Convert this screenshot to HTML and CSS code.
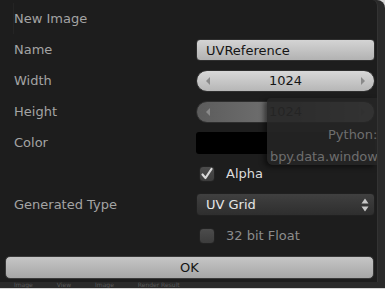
FILE: index.html
```html
<!DOCTYPE html>
<html lang="en">

<head>
    <meta charset="UTF-8">
    <title>New Image</title>
    <link rel="stylesheet" href="styles.css">
</head>

<body>

    <div id="frame">
        <div id="panel">
            <div class="title">New Image</div>

            <div class="row">
                <div class="label">Name</div>
                <div class="control">
                    <div class="text-field">UVReference</div>
                </div>
            </div>

            <div class="row">
                <div class="label">Width</div>
                <div class="control">
                    <div class="num-field">
                        <span class="arrow left"></span>
                        <span class="value">1024</span>
                        <span class="arrow right"></span>
                    </div>
                </div>
            </div>

            <div class="row">
                <div class="label">Height</div>
                <div class="control">
                    <div class="num-field dim">
                        <span class="arrow left"></span>
                        <span class="value">1024</span>
                        <span class="arrow right"></span>
                    </div>
                </div>
            </div>

            <div class="row">
                <div class="label">Color</div>
                <div class="control">
                    <div class="swatch"></div>
                </div>
            </div>

            <div class="row">
                <div class="label"></div>
                <div class="control">
                    <label class="check on">
                        <span class="box">
                            <svg width="14" height="14" viewBox="0 0 14 14">
                                <path d="M2.5 7.5 L5.5 11 L11.5 2" fill="none" stroke="#d8d8d8" stroke-width="2.2" stroke-linecap="round" stroke-linejoin="round"/>
                            </svg>
                        </span>
                        Alpha
                    </label>
                </div>
            </div>

            <div class="row">
                <div class="label">Generated Type</div>
                <div class="control">
                    <div class="menu">
                        UV Grid
                        <svg class="updown" width="8" height="14" viewBox="0 0 8 14">
                            <path d="M4 0.5 L7.5 5.5 L0.5 5.5 Z M4 13.5 L7.5 8.5 L0.5 8.5 Z" fill="#c8c8c8"/>
                        </svg>
                    </div>
                </div>
            </div>

            <div class="row">
                <div class="label"></div>
                <div class="control">
                    <label class="check">
                        <span class="box"></span>
                        32 bit Float
                    </label>
                </div>
            </div>

            <div class="ok">OK</div>

            <div class="tooltip">
                <div class="tip-line first">Python:</div>
                <div class="tip-line second">bpy.data.window</div>
            </div>
        </div>
        <div id="header">
            <span>Image</span><span>View</span><span>Image</span><span>Render Result</span>
        </div>
    </div>

</body>

</html>
```

FILE: styles.css
```css
body {
    margin: 0;
    padding: 0;
    background-color: #d6d6d6;
    font-family: 'DejaVu Sans', sans-serif;
    font-size: 13px;
    width: 385px;
    height: 289px;
    overflow: hidden;
}

#frame {
    width: 385px;
    height: 288px;
    background-color: #2a2a2a;
    border-top-right-radius: 8px;
    overflow: hidden;
}

#panel {
    position: relative;
    width: 378px;
    height: 282px;
    box-sizing: border-box;
    padding-top: 3px;
    background-color: #1d1d1d;
    border-right: 1px solid #333;
    border-top-right-radius: 6px;
    overflow: hidden;
}

.title {
    height: 31px;
    line-height: 31px;
    margin-left: 13px;
    border-left: 1px solid #242424;
    color: #a4a4a4;
}

.row {
    display: flex;
    align-items: center;
    height: 31px;
}

.label {
    width: 182px;
    padding-left: 14px;
    box-sizing: border-box;
    color: #a4a4a4;
}

.control {
    width: 179px;
    margin-left: 14px;
}

.text-field {
    height: 22px;
    line-height: 22px;
    box-sizing: border-box;
    padding-left: 9px;
    border: 1px solid #2e2e2e;
    border-radius: 4px;
    background: linear-gradient(#d4d4d4, #b2b2b2);
    color: #151515;
}

.num-field {
    display: flex;
    align-items: center;
    height: 22px;
    box-sizing: border-box;
    padding: 0 9px;
    border: 1px solid #2e2e2e;
    border-radius: 11px;
    background: linear-gradient(#d8d8d8, #b6b6b6);
    color: #151515;
}

.num-field.dim {
    background: linear-gradient(to right, #5c5c5c, #777 60%, #a8a8a8);
}

.num-field .value {
    flex: 1;
    text-align: center;
}

.arrow {
    width: 0;
    height: 0;
    border-top: 4px solid transparent;
    border-bottom: 4px solid transparent;
}

.arrow.left {
    border-right: 4px solid #8a8a8a;
}

.arrow.right {
    border-left: 4px solid #8a8a8a;
}

.swatch {
    height: 22px;
    border-radius: 3px;
    background-color: #000;
}

.check {
    display: flex;
    align-items: center;
    gap: 11px;
    margin-left: 3px;
    color: #8c8c8c;
}

.check.on {
    color: #dcdcdc;
}

.box {
    display: flex;
    align-items: center;
    justify-content: center;
    width: 16px;
    height: 16px;
    box-sizing: border-box;
    border: 1px solid #222;
    border-radius: 4px;
    background: linear-gradient(#4c4c4c, #3c3c3c);
}

.menu {
    display: flex;
    align-items: center;
    justify-content: space-between;
    height: 23px;
    box-sizing: border-box;
    padding: 0 5px 0 9px;
    border: 1px solid #202020;
    border-radius: 4px;
    background: linear-gradient(#404040, #2e2e2e);
    color: #e6e6e6;
}

.ok {
    margin: 5px 3px 0 5px;
    height: 23px;
    line-height: 21px;
    box-sizing: border-box;
    border: 1px solid #3a3a3a;
    border-radius: 5px;
    background: linear-gradient(#c6c6c6, #a6a6a6);
    color: #151515;
    text-align: center;
}

.tooltip {
    position: absolute;
    left: 267px;
    top: 98px;
    width: 110px;
    height: 67px;
    background-color: rgba(38, 38, 38, 0.9);
    border-radius: 4px 0 0 6px;
    box-shadow: -3px 2px 5px rgba(0, 0, 0, 0.5);
    color: #6e6e6e;
    white-space: nowrap;
}

.tip-line {
    height: 22px;
    line-height: 22px;
}

.tip-line.first {
    margin-top: 26px;
    padding-left: 61px;
}

.tip-line.second {
    padding-left: 3px;
    letter-spacing: -0.1px;
}

#header {
    display: flex;
    gap: 24px;
    height: 6px;
    padding-left: 14px;
    font-size: 6px;
    line-height: 6px;
    color: #5a5a5a;
    overflow: hidden;
}
```
